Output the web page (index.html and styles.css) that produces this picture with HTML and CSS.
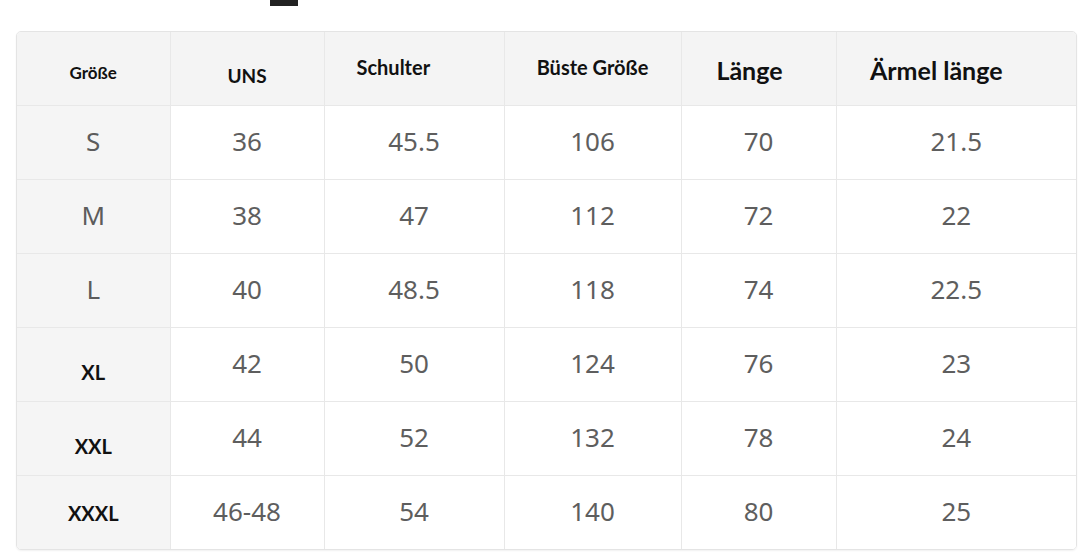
FILE: index.html
```html
<!DOCTYPE html>
<html lang="de">
<head>
<meta charset="utf-8">
<link rel="stylesheet" href="styles.css">
</head>
<body>
<div class="page">
  <div class="topmark"></div>
  <div class="card">
    <table class="sizes">
      <colgroup>
        <col class="c1"><col class="c2"><col class="c3"><col class="c4"><col class="c5"><col class="c6">
      </colgroup>
      <thead>
        <tr>
          <th class="h-size"><span>Größe</span></th>
          <th class="h-uns"><span>UNS</span></th>
          <th class="h-schulter"><span>Schulter</span></th>
          <th class="h-buste"><span>Büste Größe</span></th>
          <th class="h-lange"><span>Länge</span></th>
          <th class="h-armel"><span>Ärmel länge</span></th>
        </tr>
      </thead>
      <tbody>
        <tr><td class="sz">S</td><td>36</td><td>45.5</td><td>106</td><td>70</td><td>21.5</td></tr>
        <tr><td class="sz">M</td><td>38</td><td>47</td><td>112</td><td>72</td><td>22</td></tr>
        <tr><td class="sz">L</td><td>40</td><td>48.5</td><td>118</td><td>74</td><td>22.5</td></tr>
        <tr><td class="sz bold low"><span>XL</span></td><td>42</td><td>50</td><td>124</td><td>76</td><td>23</td></tr>
        <tr><td class="sz bold low"><span>XXL</span></td><td>44</td><td>52</td><td>132</td><td>78</td><td>24</td></tr>
        <tr><td class="sz bold"><span>XXXL</span></td><td>46-48</td><td>54</td><td>140</td><td>80</td><td>25</td></tr>
      </tbody>
    </table>
  </div>
</div>
</body>
</html>
```

FILE: styles.css
```css
html, body {
  margin: 0;
  padding: 0;
  background: #ffffff;
}

.page {
  width: 1080px;
  height: 557px;
  overflow: hidden;
}

.topmark {
  width: 28px;
  height: 6px;
  margin-left: 270px;
  background: #222222;
}

.card {
  margin: 25px 0 0 16px;
  width: 1059px;
  border: 1px solid #e4e4e4;
  border-radius: 5px;
  overflow: hidden;
  box-shadow: 0 1px 2px rgba(0, 0, 0, 0.06);
}

.sizes {
  width: 100%;
  border-collapse: collapse;
  table-layout: fixed;
}

.c1 { width: 153px; }
.c2 { width: 154px; }
.c3 { width: 180px; }
.c4 { width: 177px; }
.c5 { width: 155px; }
.c6 { width: auto; }

.sizes th,
.sizes td {
  padding: 0;
  border: 1px solid #e8e8e8;
  text-align: center;
  vertical-align: middle;
}

.sizes th { height: 73px; }
.sizes td { height: 70px; padding-bottom: 3px; }

.sizes tr:first-child th { border-top: none; }
.sizes tr:last-child td { border-bottom: none; }
.sizes th:first-child, .sizes td:first-child { border-left: none; }
.sizes th:last-child, .sizes td:last-child { border-right: none; }

.sizes th {
  background: #f4f4f4;
  color: #111111;
  font-family: "Lato", "Liberation Sans", sans-serif;
  font-weight: 700;
}

.sizes th span,
.sizes td.bold span {
  display: inline-block;
  position: relative;
}

.sizes th.h-size { font-size: 17px; }
.sizes th.h-size span { top: 4px; }

.sizes th.h-uns { font-size: 19px; }
.sizes th.h-uns span { top: 7px; }

.sizes th.h-schulter { font-size: 20px; text-align: left; padding-left: 32px; }
.sizes th.h-schulter span { top: -2px; }

.sizes th.h-buste { font-size: 20px; }
.sizes th.h-buste span { top: -2px; }

.sizes th.h-lange { font-size: 25px; padding-right: 18px; }
.sizes th.h-lange span { top: 1px; }

.sizes th.h-armel { font-size: 25px; padding-right: 40px; }
.sizes th.h-armel span { top: 1px; }

.sizes td {
  background: #ffffff;
  color: #5e5e5e;
  font-family: "Noto Sans", "Liberation Sans", sans-serif;
  font-weight: 400;
  font-size: 26px;
}

.sizes td.sz {
  background: #f5f5f5;
  color: #5c5c5c;
}

.sizes td.sz.bold {
  color: #111111;
  font-family: "Lato", "Liberation Sans", sans-serif;
  font-weight: 700;
  font-size: 20px;
  padding-bottom: 0;
  height: 73px;
}

.sizes td.bold.low span { top: 7px; }
.sizes td.bold span { top: 0; }
.sizes td.bold.low span { top: 7px; }
```
